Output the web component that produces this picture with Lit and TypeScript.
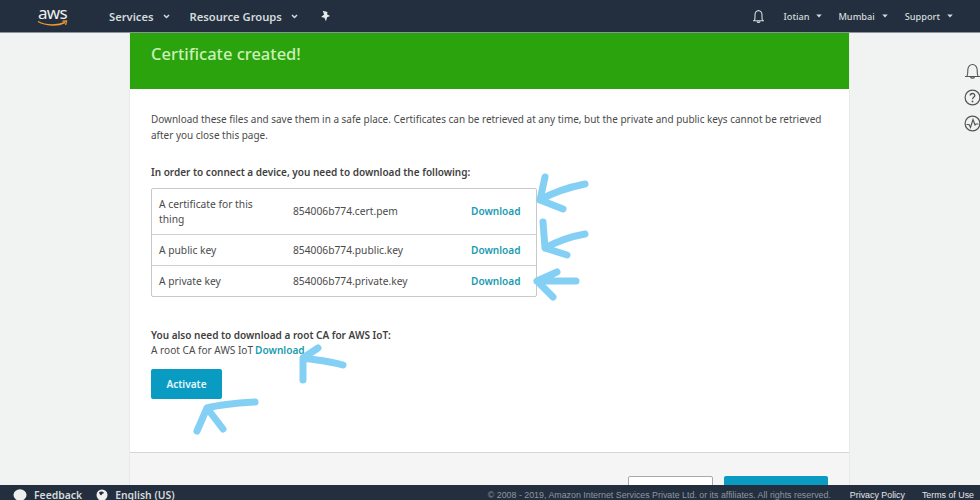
import { LitElement, html, css, svg } from "lit";
import { customElement } from "lit/decorators.js";

const caret = html`<svg class="caret" width="6" height="4" viewBox="0 0 6 4"><path d="M0.2 0.5h5.600L3 3.600z" fill="#d5dbdb"/></svg>`;
const chev = html`<svg class="chev" width="7" height="5" viewBox="0 0 7 5"><path d="M1 1l2.500 2.500L6 1" fill="none" stroke="#d5dbdb" stroke-width="1.500"/></svg>`;

const rows = [
  ["A certificate for this thing", "854006b774.cert.pem"],
  ["A public key", "854006b774.public.key"],
  ["A private key", "854006b774.private.key"],
];

@customElement("app-root")
export class AppRoot extends LitElement {
  static styles = css`
    :host { display: flex; flex-direction: column; position: relative; width: 980px; height: 500px; overflow: hidden; background: #f1f2f2; color: #4b4b4b; font-family: "Noto Sans", "Liberation Sans", sans-serif; font-size: 10.25px; }
    .top { flex: 0 0 32px; height: 32px; background: #232f3e; border-bottom: 1px solid #8a949c; box-sizing: content-box; display: flex; align-items: center; color: #d5dbdb; font-weight: 600; font-size: 11.2px; }
    .logo { margin-left: 37px; width: 31px; display: flex; flex-direction: column; align-items: center; }
    .logo span { font: 400 17px/14px "Noto Sans", sans-serif; color: #eee; letter-spacing: -0.6px; }
    .nav { display: flex; align-items: center; gap: 9px; }
    .services { margin-left: 41px; }
    .groups { margin-left: 20px; }
    .pin { margin-left: 22px; display: flex; }
    .right { margin-left: auto; display: flex; align-items: center; font-weight: 500; font-size: 9.2px; }
    .right .nav { gap: 7px; }
    .bell { display: flex; margin-right: 19px; }
    .r1 { margin-right: 16px; }
    .r2 { margin-right: 17px; }
    .r3 { margin-right: 27px; }
    main { flex: 1; min-height: 0; display: flex; overflow: hidden; }
    .gutter { flex: 0 0 129px; }
    .card { flex: 0 0 721px; min-width: 0; background: #fff; display: flex; flex-direction: column; border-left: 1px solid #e8e9e9; border-right: 1px solid #e8e9e9; box-sizing: border-box; }
    .banner { flex: 0 0 56px; background: #2ba30d; color: #c9f0b8; font-size: 16.5px; font-weight: 500; padding: 9px 21px 0; box-sizing: border-box; line-height: 23px; }
    .body { flex: 0 0 363px; padding: 23px 21px 0; box-sizing: border-box; }
    .body p { margin: 0; font-size: 9.96px; line-height: 15.5px; }
    h4 { margin: 0; font-size: 10px; font-weight: 600; line-height: 15px; color: #3f3f3f; }
    .h1 { margin-top: 22px; }
    .tbl { margin-top: 8px; width: 386px; border: 1px solid #c8c9c9; border-radius: 2px; box-sizing: border-box; }
    .row { display: grid; grid-template-columns: 134px 178px 1fr; align-items: center; padding: 0 7px; height: 31px; box-sizing: border-box; line-height: 15px; }
    .row + .row { border-top: 1px solid #cfd0d0; }
    .row:first-child { height: 45px; }
    .row div:first-child { width: 105px; }
    .link { color: #1b9bb0; font-weight: 600; font-size: 10.1px; }
    .h2 { margin-top: 31px; }
    .ca { line-height: 14px; display: flex; gap: 2px; font-size: 10.1px; }
    .activate { margin-top: 12px; width: 71px; height: 30px; background: #0a9bc3; color: #e6f7fb; font-weight: 600; font-size: 10.1px; border-radius: 2px; display: flex; align-items: center; justify-content: center; }
    .foot { flex: 1; background: #f5f5f5; border-top: 1px solid #d5d6d6; display: flex; justify-content: flex-end; gap: 11px; padding: 23px 21px 0 0; }
    .btn { width: 85px; height: 34px; box-sizing: border-box; background: #fff; border: 1px solid #a9a9a9; border-radius: 2px; }
    .btn.pri { width: 104px; background: #0a9bc3; border: 0; }
    .rail { flex: 0 0 130px; min-width: 0; box-sizing: border-box; display: flex; flex-direction: column; align-items: flex-start; gap: 9px; padding: 30px 0 0 114px; overflow: hidden; }
    .rail svg { flex: none; }
    footer { flex: 0 0 15px; height: 15px; overflow: hidden; background: #232f3e; color: #d5dbdb; display: flex; align-items: flex-start; }
    .fl { display: flex; align-items: center; height: 20px; font-weight: 600; font-size: 10.4px; margin-left: 13px; }
    .fl svg { flex: none; }
    .fl .t1 { margin: 0 14px 0 7px; }
    .fr { margin-left: auto; display: flex; height: 20px; align-items: center; font-family: "Liberation Sans", sans-serif; font-size: 8.85px; white-space: nowrap; }
    .copy { color: #8d969e; margin-right: 19px; }
    .fr b { font-weight: 400; color: #e3e6e6; margin-right: 17px; }
    .fr b:last-child { margin-right: 6px; }
    .marks { position: absolute; inset: 0; pointer-events: none; }
    .marks path { fill: none; stroke: #84d0f5; stroke-width: 7; stroke-linecap: round; stroke-linejoin: round; }
  `;

  private marks = svg`
    <path d="M585 184C565 188 552 193 540 200L563 209M545 177L540 200"/>
    <path d="M543 222L545 248L567 255M585 234C568 237 556 242 545 248"/>
    <path d="M576 281L537 281L557 272M537 281L553 297"/>
    <path d="M343 365C330 361 316 360 303 358L318 348M303 358L303 380"/>
    <path d="M255 402C238 403 218 405 207 408L197 431M207 408L223 429"/>
  `;

  render() {
    return html`
      <div class="top">
        <div class="logo"><span>aws</span>
          <svg width="31" height="7" viewBox="0 0 31 7"><path d="M1 1.500C9 6 21 6 28 2.500" fill="none" stroke="#f09a2a" stroke-width="1.400"/><path d="M25.500 1.200L29.600 1L28.600 5" fill="none" stroke="#f09a2a" stroke-width="1.200"/></svg>
        </div>
        <div class="nav services">Services ${chev}</div>
        <div class="nav groups">Resource Groups ${chev}</div>
        <div class="pin"><svg width="11" height="12" viewBox="0 0 10 11"><path d="M2.500 .6L6.800 1.800 6.400 4 9.200 5.400 6.500 6.600 5.400 10.400 4 7 1 6.400 3.700 4.200z" fill="#e8eaea"/></svg></div>
        <div class="right">
          <div class="bell"><svg width="13" height="15" viewBox="0 0 13 15"><path d="M1 11.800h11M2.400 11.500C3.200 10 3 8 3 6c0-2.400 1.500-4.400 3.500-4.400S10 3.600 10 6c0 2 -.2 4 .6 5.500M5 12.500c.4 1.200 2.600 1.200 3 0" fill="none" stroke="#d5dbdb" stroke-width="1.100"/></svg></div>
          <div class="nav r1">Iotian ${caret}</div>
          <div class="nav r2">Mumbai ${caret}</div>
          <div class="nav r3">Support ${caret}</div>
        </div>
      </div>
      <main>
        <div class="gutter"></div>
        <div class="card">
          <div class="banner">Certificate created!</div>
          <div class="body">
            <p>Download these files and save them in a safe place. Certificates can be retrieved at any time, but the private and public keys cannot be retrieved after you close this page.</p>
            <h4 class="h1">In order to connect a device, you need to download the following:</h4>
            <div class="tbl">
              ${rows.map(r => html`<div class="row"><div>${r[0]}</div><div>${r[1]}</div><div class="link">Download</div></div>`)}
            </div>
            <h4 class="h2">You also need to download a root CA for AWS IoT:</h4>
            <div class="ca"><span>A root CA for AWS IoT</span><span class="link">Download</span></div>
            <div class="activate">Activate</div>
          </div>
          <div class="foot"><div class="btn"></div><div class="btn pri"></div></div>
        </div>
        <div class="rail">
          <svg width="17" height="17" viewBox="0 0 17 17"><path d="M1 13.500h15M3 13C4 11 3.800 9 3.800 7c0-3 2-5.500 4.700-5.500S13.200 4 13.200 7c0 2 -.2 4 .8 6M6.500 14c.5 1.500 3.500 1.500 4 0" fill="none" stroke="#555" stroke-width="1.100"/></svg>
          <svg width="17" height="17" viewBox="0 0 17 17"><circle cx="8.500" cy="8.500" r="7.400" fill="none" stroke="#555" stroke-width="1.200"/><path d="M6.200 6.600C6.300 3.800 10.800 3.800 10.800 6.500 10.800 8.300 8.500 8.300 8.500 10.200" fill="none" stroke="#555" stroke-width="1.300"/><circle cx="8.500" cy="12.500" r=".9" fill="#555"/></svg>
          <svg width="17" height="17" viewBox="0 0 17 17"><circle cx="8.500" cy="8.500" r="7.400" fill="none" stroke="#555" stroke-width="1.200"/><path d="M2.500 9.500h2.500L6.500 12.500 9 4.500 11 10l1-1h2.500" fill="none" stroke="#555" stroke-width="1.200"/></svg>
        </div>
      </main>
      <footer>
        <div class="fl">
          <svg width="14" height="14" viewBox="0 0 14 14"><ellipse cx="7" cy="7" rx="6.500" ry="5.800" fill="#eef0f0"/></svg>
          <span class="t1">Feedback</span>
          <svg width="12" height="12" viewBox="0 0 12 12"><circle cx="6" cy="6" r="5.500" fill="#eef0f0"/><path d="M3 3.500c2-1.500 4-1 5 .5-1 1-2 .5-2.500 2C5 7 3.500 5.500 3 3.500z" fill="#232f3e"/></svg>
          <span class="t1">English (US)</span>
        </div>
        <div class="fr">
          <span class="copy">© 2008 - 2019, Amazon Internet Services Private Ltd. or its affiliates. All rights reserved.</span>
          <b>Privacy Policy</b><b>Terms of Use</b>
        </div>
      </footer>
      <svg class="marks" width="980" height="500" viewBox="0 0 980 500">${this.marks}</svg>
    `;
  }
}
